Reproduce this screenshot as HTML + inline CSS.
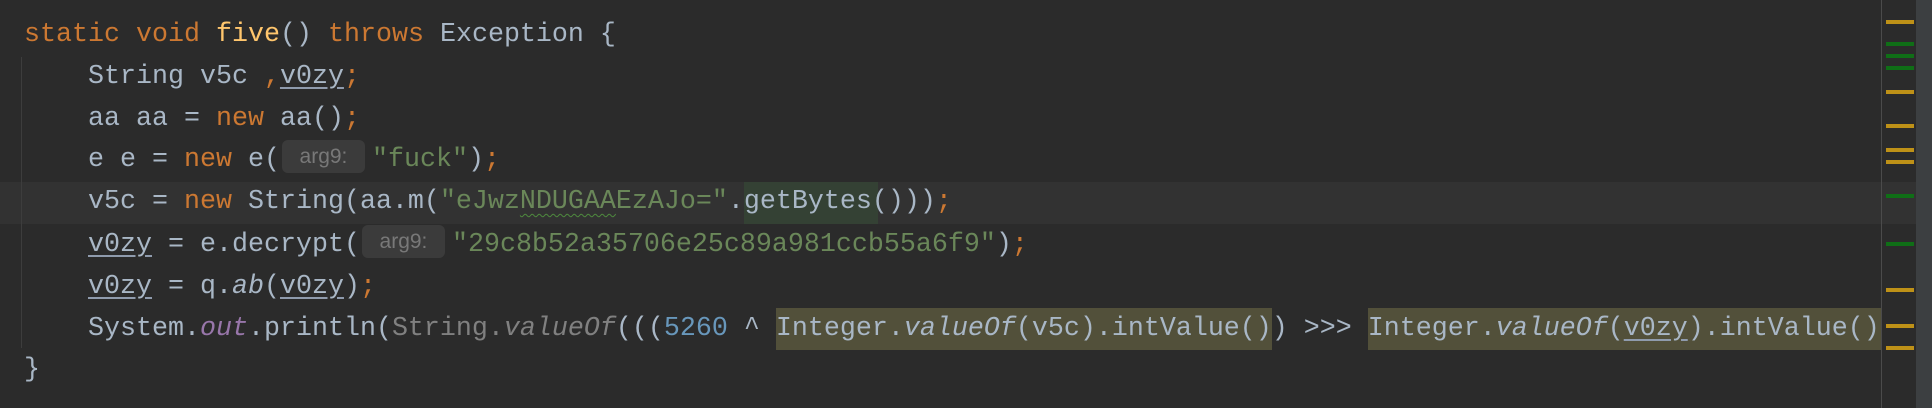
<!DOCTYPE html>
<html><head><meta charset="utf-8"><style>
html,body{margin:0;padding:0;width:1932px;height:408px;overflow:hidden;background:#2b2b2b}
.ed{position:absolute;left:0;top:0;width:1881px;height:408px;overflow:hidden}
.ln{position:absolute;left:24px;height:42px;line-height:42px;white-space:pre;font-family:"Liberation Mono",monospace;font-size:26.67px;color:#a9b7c6}
.k{color:#cc7832}.f{color:#ffc66d}.s{color:#6a8759}.n{color:#6897bb}
.o{color:#9876aa;font-style:italic}.i{font-style:italic}.g{color:#808080}
.u{text-decoration:underline;text-decoration-color:#8f9bad;text-underline-offset:4px}
.h{display:inline-block;width:83px;height:33px;margin:0 7px 0 2px;background:#3b3b3b;border-radius:6px;color:#787878;font-family:"Liberation Sans",sans-serif;font-size:21px;line-height:33px;text-align:center;vertical-align:middle;position:relative;top:-2px}
.w{text-decoration:underline wavy #4e8a3e;text-underline-offset:5px;text-decoration-thickness:1px}
.bg{position:absolute}
.m{position:absolute;left:1886px;width:28px;height:4px}
.y{background:#be9117}.gr{background:#0f6e16}
</style></head><body>
<div class="ed">
<div class="bg" style="left:0;top:182px;width:1881px;height:42px;background:#323232"></div>
<div class="bg" style="left:21px;top:57px;width:1px;height:291px;background:#3d3d3d"></div>
<div class="bg" style="left:744px;top:182px;width:134px;height:42px;background:#344134"></div>
<div class="bg" style="left:776px;top:308px;width:496px;height:42px;background:#52503a"></div>
<div class="bg" style="left:1368px;top:308px;width:513px;height:42px;background:#52503a"></div>

<div class="ln" style="top:14px"><span class="k">static void </span><span class="f">five</span>() <span class="k">throws </span>Exception {</div>
<div class="ln" style="top:56px">    String v5c <span class="k">,</span><span class="u">v0zy</span><span class="k">;</span></div>
<div class="ln" style="top:98px">    aa aa = <span class="k">new </span>aa()<span class="k">;</span></div>
<div class="ln" style="top:139px">    e e = <span class="k">new </span>e(<span class="h">arg9:</span><span class="s">"fuck"</span>)<span class="k">;</span></div>
<div class="ln" style="top:181px">    v5c = <span class="k">new </span>String(aa.m(<span class="s">"eJwz<span class="w">NDUGAA</span>EzAJo="</span>.getBytes()))<span class="k">;</span></div>
<div class="ln" style="top:224px">    <span class="u">v0zy</span> = e.decrypt(<span class="h">arg9:</span><span class="s">"29c8b52a35706e25c89a981ccb55a6f9"</span>)<span class="k">;</span></div>
<div class="ln" style="top:266px">    <span class="u">v0zy</span> = q.<span class="i">ab</span>(<span class="u">v0zy</span>)<span class="k">;</span></div>
<div class="ln" style="top:308px">    System.<span class="o">out</span>.println(<span class="g">String.<span class="i">valueOf</span></span>(((<span class="n">5260</span> ^ Integer.<span class="i">valueOf</span>(v5c).intValue()) &gt;&gt;&gt; Integer.<span class="i">valueOf</span>(<span class="u">v0zy</span>).intValue()))<span class="k">;</span></div>
<div class="ln" style="top:349px">}</div>
</div>
<div class="bg" style="left:1881px;top:0;width:1px;height:408px;background:#4b4b4b"></div>
<div class="bg" style="left:1882px;top:182px;width:34px;height:42px;background:#323232"></div>
<div class="bg" style="left:1916px;top:0;width:16px;height:408px;background:#3c3f41"></div>
<div class="m y" style="top:20px"></div>
<div class="m gr" style="top:42px"></div>
<div class="m gr" style="top:54px"></div>
<div class="m gr" style="top:66px"></div>
<div class="m y" style="top:90px"></div>
<div class="m y" style="top:124px"></div>
<div class="m y" style="top:148px"></div>
<div class="m y" style="top:160px"></div>
<div class="m gr" style="top:194px"></div>
<div class="m gr" style="top:242px"></div>
<div class="m y" style="top:288px"></div>
<div class="m y" style="top:324px"></div>
<div class="m y" style="top:346px"></div>
</body></html>
